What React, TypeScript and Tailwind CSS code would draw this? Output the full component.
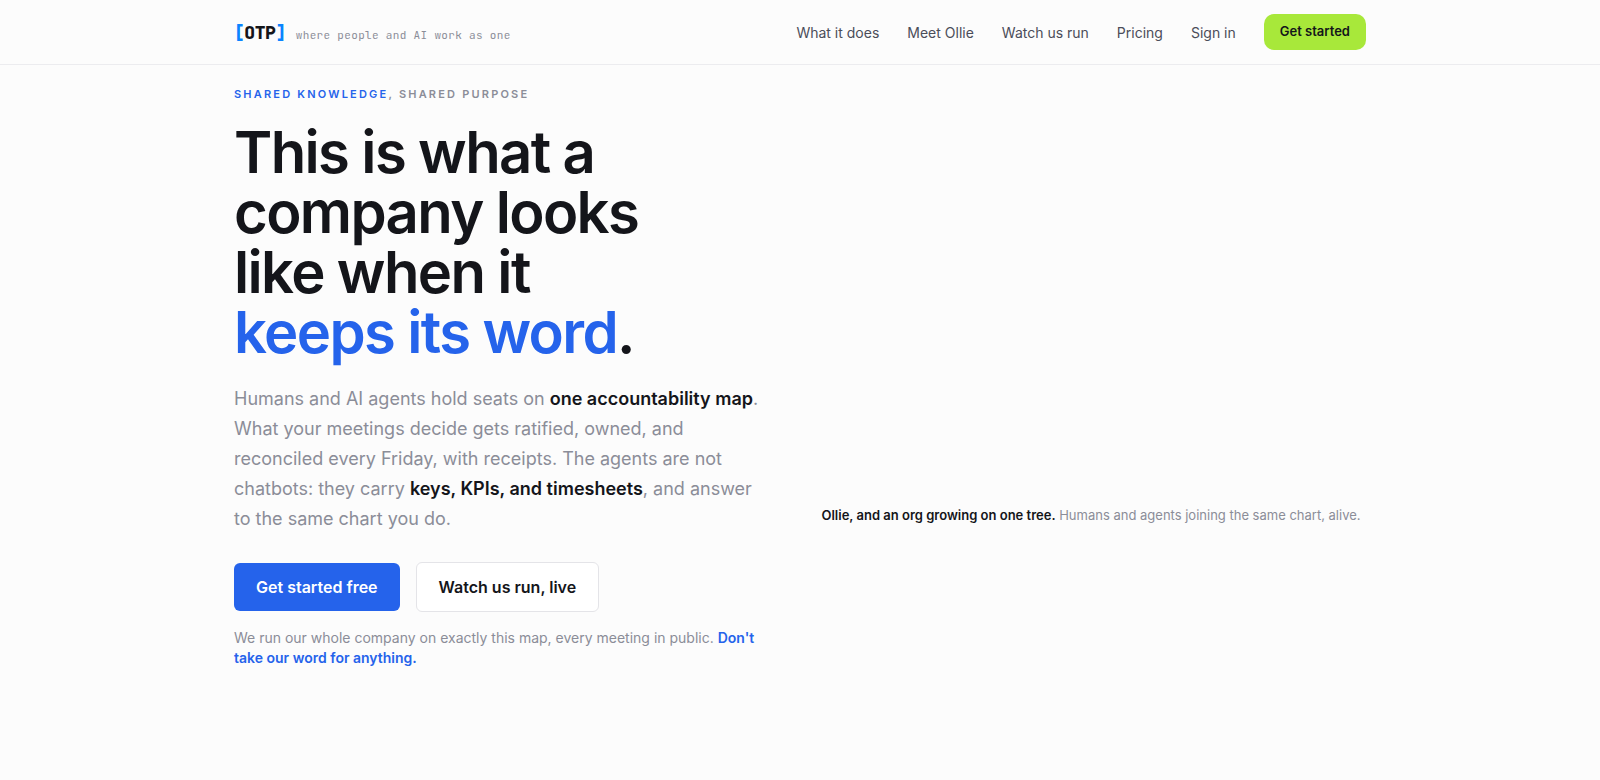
const links = [
  { label: "What it does", href: "#what" },
  { label: "Meet Ollie", href: "#ollie" },
  { label: "Watch us run", href: "#live" },
  { label: "Pricing", href: "#pricing" },
  { label: "Sign in", href: "#signin" },
]

function Header() {
  return (
    <header className="border-b border-[#ececef]">
      <div className="mx-auto flex h-16 max-w-[1180px] items-center justify-between px-6">
        <a href="#top" className="flex items-baseline gap-2.5 pt-0.5 font-['JetBrains_Mono','DejaVu_Sans_Mono',monospace]">
          <span className="text-lg font-extrabold tracking-tight text-[#14151a]">
            <span className="text-[#0a84ff]">[</span>OTP<span className="text-[#0a84ff]">]</span>
          </span>
          <span className="text-[11px] tracking-[0.03em] text-[#8b8d98]">where people and AI work as one</span>
        </a>
        <nav className="flex items-center gap-7">
          {links.map((link) => (
            <a key={link.label} href={link.href} className="pt-0.5 text-sm text-[#4b4d59]">
              {link.label}
            </a>
          ))}
          <button type="button" className="h-9 rounded-[10px] bg-[#a8e83a] px-4 text-[13px] font-semibold text-[#14151a]">
            Get started
          </button>
        </nav>
      </div>
    </header>
  )
}

function Hero() {
  return (
    <section className="mx-auto grid max-w-[1180px] grid-cols-2 items-center gap-8 px-6 pt-[21px] pb-24">
      <div className="max-w-[530px]">
        <p className="text-[11px] leading-4 font-semibold tracking-[0.2em] text-[#8b8d98] uppercase">
          <span className="text-[#2563eb]">Shared knowledge</span>, shared purpose
        </p>
        <h1 className="mt-5 text-[58px] leading-[60px] font-semibold tracking-[-0.028em] text-[#14151a]">
          This is what a
          <br />
          company looks
          <br />
          like when it
          <br />
          <span className="text-[#2563eb]">keeps its word</span>.
        </h1>
        <p className="mt-[22px] text-lg leading-[30px] text-[#8b8d98]">
          Humans and AI agents hold seats on{" "}
          <strong className="font-semibold text-[#14151a]">one accountability map</strong>. What your meetings decide
          gets ratified, owned, and reconciled every Friday, with receipts. The agents are not chatbots: they carry{" "}
          <strong className="font-semibold text-[#14151a]">keys, KPIs, and timesheets</strong>, and answer to the same
          chart you do.
        </p>
        <div className="mt-7 flex items-center gap-4">
          <button
            type="button"
            className="rounded-md bg-[#2563eb] px-[22px] py-3 text-base leading-6 font-semibold text-white"
          >
            Get started free
          </button>
          <button
            type="button"
            className="rounded-md border border-[#e4e4e8] bg-white px-[22px] py-3 text-base leading-6 font-semibold text-[#14151a]"
          >
            Watch us run, live
          </button>
        </div>
        <p className="mt-4 text-sm leading-5 text-[#8b8d98]">
          We run our whole company on exactly this map, every meeting in public.{" "}
          <a href="#live" className="font-semibold text-[#2563eb]">
            Don't take our word for anything.
          </a>
        </p>
      </div>

      <figure>
        <div className="h-[276px]" />
        <figcaption className="text-center text-[13px] leading-5 text-[#8b8d98]">
          <strong className="font-semibold text-[#14151a]">Ollie, and an org growing on one tree.</strong> Humans and
          agents joining the same chart, alive.
        </figcaption>
      </figure>
    </section>
  )
}

export default function App() {
  return (
    <div id="top" className="min-h-screen bg-[#fcfcfc] font-['Inter',sans-serif]">
      <Header />
      <main>
        <Hero />
      </main>
    </div>
  )
}
